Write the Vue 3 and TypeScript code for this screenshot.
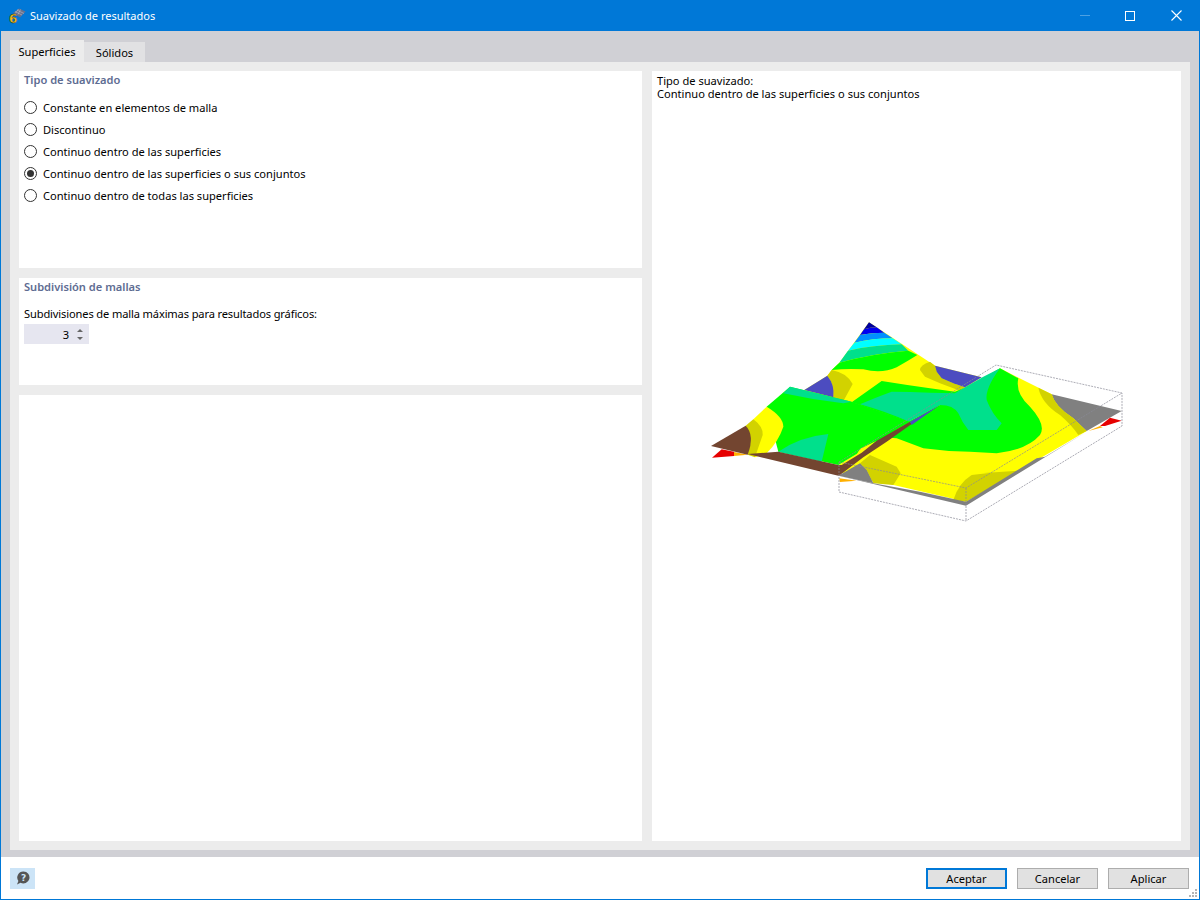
<script setup lang="ts">
import { ref } from 'vue'

interface Shape {
  d: string
  fill: string
}

const tabs = ['Superficies', 'Sólidos']
const activeTab = ref('Superficies')

const options = [
  'Constante en elementos de malla',
  'Discontinuo',
  'Continuo dentro de las superficies',
  'Continuo dentro de las superficies o sus conjuntos',
  'Continuo dentro de todas las superficies',
]
const smoothing = ref(options[3])

const YELLOW = '#ffff00'
const OLIVE = '#d2d200'
const GREEN = '#00ff00'
const TEAL = '#00e08c'
const BROWN = '#734530'
const PURPLE = '#4c4cc0'
const GRAY = '#808080'

// back plate with the peak
const backPlate: Shape[] = [
  { fill: YELLOW, d: 'M507,37 L705,167 L845,202 L720,285 L625,335 L313,240 L382,197 L395,180 L418,158 Z' },
  { fill: '#0000a0', d: 'M507,37 L492,58 Q510,52 530,52 Z' },
  { fill: '#0000f0', d: 'M492,58 L480,75 Q515,68 553,68 L530,52 Q510,52 492,58 Z' },
  { fill: '#0090ff', d: 'M480,75 L463,98 Q520,85 578,85 L553,68 Q515,68 480,75 Z' },
  { fill: '#00ffff', d: 'M463,98 L444,122 Q520,105 605,103 L578,85 Q520,85 463,98 Z' },
  { fill: TEAL, d: 'M444,122 L418,158 Q520,130 625,122 L605,103 Q520,105 444,122 Z' },
  { fill: GREEN, d: 'M418,158 L395,180 Q440,175 490,178 Q545,192 590,172 Q620,155 652,135 L625,122 Q520,130 418,158 Z' },
  { fill: OLIVE, d: 'M395,180 L382,197 Q405,225 400,262 L432,270 L458,222 Q440,188 395,180 Z' },
  { fill: PURPLE, d: 'M382,197 L313,240 L400,262 Q405,225 382,197 Z' },
  { fill: OLIVE, d: 'M690,155 L705,167 L710,185 L725,205 L760,220 L795,232 L780,242 L720,220 L675,200 L660,180 Q660,165 690,155 Z' },
  { fill: PURPLE, d: 'M705,167 L845,202 L795,232 L760,220 L725,205 L710,185 Z' },
  { fill: GREEN, d: 'M455,277 L545,213 Q620,225 690,235 L765,245 L790,235 L720,285 L625,335 Z' },
]

// right plate, in its own crop coordinates
const rightPlate: Shape[] = [
  { fill: '#ffb000', d: 'M-242,385 L-190,392 L-240,396 Z' },
  { fill: YELLOW, d: 'M240,55 L395,133 L500,243 L138,455 L-245,367 L-245,345 L-35,215 L60,165 Z' },
  { fill: GRAY, d: 'M395,133 L605,183 L500,243 Q480,225 460,205 Q405,170 395,133 Z' },
  { fill: OLIVE, d: 'M355,113 L395,133 Q405,170 460,205 L500,243 L475,255 Q455,225 420,195 Q365,160 355,113 Z' },
  { fill: OLIVE, d: 'M100,450 Q115,400 155,375 Q230,365 300,362 L138,455 Z' },
  { fill: OLIVE, d: 'M-180,340 L-150,315 L-70,350 L-58,370 L-80,405 L-140,400 L-160,360 Z' },
  { fill: GRAY, d: 'M-245,377 L-180,340 L-160,360 L-140,400 Z' },
  { fill: GRAY, d: 'M-245,377 L-140,400 L0,425 L138,455 L350,325 L375,320 L500,245 L138,467 Z' },
  { fill: GREEN, d: 'M-100,265 Q-90,262 -70,265 Q-30,280 10,295 Q80,305 150,305 L230,310 Q320,300 360,255 Q380,225 330,170 Q285,130 295,85 L240,55 L60,165 L-35,215 Z' },
  { fill: TEAL, d: 'M-180,163 Q-140,145 -85,125 Q-30,125 30,128 L105,130 L130,115 L190,80 L240,55 Q195,115 200,150 Q215,190 245,220 L230,240 L145,240 Q125,215 115,190 Q100,165 60,165 L-35,215 Q-100,185 -180,163 Z' },
  { fill: '#e60000', d: 'M540,228 L570,203 L605,212 L555,228 Z' },
  { fill: '#ffb000', d: 'M505,243 L540,228 L548,232 Z' },
]

// front left plate and the brown ridge
const leftPlate: Shape[] = [
  { fill: '#e60000', d: 'M36,443 L65,418 L102,425 L102,438 Z' },
  { fill: '#ffb000', d: 'M102,426 L143,434 L102,438 Z' },
  { fill: GREEN, d: 'M270,230 L200,290 L235,425 L415,465 L630,335 L455,275 Z' },
  { fill: TEAL, d: 'M270,230 L455,275 L430,280 Q340,270 250,250 Z' },
  { fill: TEAL, d: 'M235,425 Q300,380 385,372 L365,455 Z' },
  { fill: YELLOW, d: 'M160,328 L200,290 Q250,320 250,350 Q235,395 200,430 L165,442 Z' },
  { fill: OLIVE, d: 'M137,347 L160,328 Q190,350 188,375 L165,442 L143,434 Z' },
  { fill: BROWN, d: 'M33,408 L137,347 Q165,375 143,434 Z' },
  { fill: YELLOW, d: 'M470,435 Q478,415 490,412 L530,392 L485,428 Z' },
  { fill: BROWN, d: 'M143,432 L235,425 L415,465 L425,465 L485,428 L530,392 L630,335 L635,342 L560,395 L490,442 L420,495 L415,497 Z' },
  { fill: PURPLE, d: 'M630,335 L720,285 L635,345 Z' },
]

const boxLines = [
  'M839,462 L996,365 L1122,393 L966,488 L839,462',
  'M839,492 L966,521 L1122,426 L1122,393',
  'M839,462 L839,492',
  'M966,488 L966,521',
]
</script>

<template>
  <div class="window">
    <header class="titlebar">
      <svg class="app-icon" viewBox="0 0 18 16" aria-hidden="true">
        <path d="M5 5 L11 0.5 L17.5 3.5 L12 9.5 Z" fill="#67708c" />
        <path d="M7 3.5 L14 7 M9 2 L16 5.5 M10 6.5 L12.5 1.5 M7.5 5 L10.5 1" stroke="#b5bccd" stroke-width="0.6" />
        <text x="1" y="14.5" class="app-six">6</text>
      </svg>
      <span class="title">Suavizado de resultados</span>
      <div class="window-buttons">
        <span class="wb-min"></span>
        <span class="wb-max"></span>
        <svg class="wb-close" viewBox="0 0 11 11" aria-hidden="true">
          <path d="M0.5 0.5 L10.5 10.5 M10.5 0.5 L0.5 10.5" stroke="#fff" stroke-width="1.1" />
        </svg>
      </div>
    </header>

    <div class="body">
      <nav class="tabs">
        <button
          v-for="tab in tabs"
          :key="tab"
          class="tab"
          :class="{ 'tab--active': tab === activeTab }"
          @click="activeTab = tab"
        >
          {{ tab }}
        </button>
      </nav>

      <main class="content">
        <div class="left">
          <section class="panel panel--type">
            <h3>Tipo de suavizado</h3>
            <div class="radios">
              <label v-for="opt in options" :key="opt" class="radio">
                <input v-model="smoothing" type="radio" name="smoothing" :value="opt" />
                <span>{{ opt }}</span>
              </label>
            </div>
          </section>

          <section class="panel panel--mesh">
            <h3>Subdivisión de mallas</h3>
            <p class="mesh-label">Subdivisiones de malla máximas para resultados gráficos:</p>
            <div class="spinner">
              <span class="spinner-value">3</span>
              <span class="spinner-arrows">
                <i class="arrow-up"></i>
                <i class="arrow-down"></i>
              </span>
            </div>
          </section>

          <section class="panel panel--empty"></section>
        </div>

        <section class="panel preview">
          <p class="preview-text">Tipo de suavizado:<br />{{ smoothing }}</p>
          <svg class="plot" viewBox="652 102 529 739">
            <g transform="translate(700 310) scale(0.33333)">
              <path v-for="(s, i) in backPlate" :key="'b' + i" :d="s.d" :fill="s.fill" />
              <g transform="translate(660 120)">
                <path v-for="(s, i) in rightPlate" :key="'r' + i" :d="s.d" :fill="s.fill" />
              </g>
              <path v-for="(s, i) in leftPlate" :key="'l' + i" :d="s.d" :fill="s.fill" />
            </g>
            <path
              v-for="line in boxLines"
              :key="line"
              :d="line"
              class="box-line"
            />
          </svg>
        </section>
      </main>
    </div>

    <footer class="footer">
      <button class="help" aria-label="Ayuda">
        <svg viewBox="0 0 16 16" width="16" height="16" aria-hidden="true">
          <path d="M8.5 1.5 a6 6 0 1 1 -3 11.2 L2 14.5 L3.4 11 A6 6 0 0 1 8.5 1.5 Z" fill="#555" />
          <text x="8.5" y="11" class="help-mark">?</text>
        </svg>
      </button>
      <div class="actions">
        <button class="btn btn--default">Aceptar</button>
        <button class="btn">Cancelar</button>
        <button class="btn">Aplicar</button>
      </div>
      <svg class="grip" viewBox="0 0 10 10" aria-hidden="true">
        <path d="M7 1h2v2H7zM4 4h2v2H4zM7 4h2v2H7zM1 7h2v2H1zM4 7h2v2H4zM7 7h2v2H7z" fill="#b4b4b4" />
      </svg>
    </footer>
  </div>
</template>

<style scoped>
.window {
  position: relative;
  box-sizing: border-box;
  width: 1200px;
  height: 900px;
  display: flex;
  flex-direction: column;
  border: 1px solid #0078d7;
  border-top: 0;
  font-family: "Noto Sans", sans-serif;
  font-size: 11.1px;
  color: #000;
  background: #fff;
}

/* title bar */
.titlebar {
  height: 31px;
  margin: 0 -1px;
  flex-shrink: 0;
  display: flex;
  align-items: center;
  padding-left: 8px;
  background: #0078d7;
  color: #fff;
}

.app-icon {
  width: 18px;
  height: 16px;
  margin-right: 4px;
  overflow: visible;
}

.app-six {
  font-family: "DejaVu Sans", sans-serif;
  font-weight: 700;
  font-size: 12px;
  fill: #f4c020;
  stroke: #3a3010;
  stroke-width: 0.4px;
}

.title {
  font-size: 11px;
}

.window-buttons {
  margin-left: auto;
  display: flex;
  align-items: center;
  margin-right: 18px;
}

.wb-min {
  width: 10px;
  height: 1px;
  margin-right: 35px;
  background: #4da1e3;
}

.wb-max {
  box-sizing: border-box;
  width: 10px;
  height: 10px;
  margin-right: 36px;
  border: 1px solid #fff;
}

.wb-close {
  width: 11px;
  height: 11px;
}

/* tabs and content */
.body {
  flex: 1;
  display: flex;
  flex-direction: column;
  padding: 9px 9px 7px;
  background: #d0d0d5;
  min-height: 0;
}

.tabs {
  display: flex;
  align-items: flex-end;
  height: 22px;
  flex-shrink: 0;
}

.tab {
  height: 20px;
  padding: 0;
  border: 0;
  font: inherit;
  background: #e1e1e3;
  color: #000;
}

.tab:first-child {
  width: 74px;
}

.tab:last-child {
  width: 61px;
}

.tab--active {
  height: 22px;
  background: #ececec;
}

.content {
  flex: 1;
  display: grid;
  grid-template-columns: 623px 529px;
  gap: 10px;
  padding: 9px;
  background: #ececec;
  min-height: 0;
}

.left {
  display: grid;
  grid-template-rows: 197px 107px 446px;
  gap: 10px;
}

.panel {
  background: #fff;
  min-width: 0;
}

h3 {
  margin: 0;
  padding: 2px 5px 0;
  font-size: 11.1px;
  line-height: 14px;
  font-weight: 600;
  color: #5e6c92;
}

.radios {
  display: flex;
  flex-direction: column;
  gap: 6px;
  padding: 12px 5px 0;
}

.radio {
  display: flex;
  align-items: center;
  height: 16px;
  gap: 6px;
}

.radio input {
  appearance: none;
  box-sizing: border-box;
  width: 13px;
  height: 13px;
  margin: 0;
  border: 1px solid #333;
  border-radius: 50%;
  background: #fff;
  display: grid;
  place-items: center;
}

.radio input:checked::before {
  content: "";
  width: 7px;
  height: 7px;
  border-radius: 50%;
  background: #333;
}

.mesh-label {
  margin: 12px 0 0;
  padding: 0 5px;
  line-height: 16px;
  letter-spacing: -0.13px;
}

.spinner {
  display: flex;
  align-items: center;
  justify-content: flex-end;
  width: 65px;
  height: 20px;
  margin: 2px 0 0 5px;
  background: #e6e6f0;
}

.spinner-value {
  margin-right: 8px;
}

.spinner-arrows {
  display: flex;
  flex-direction: column;
  gap: 5px;
  margin-right: 6px;
}

.arrow-up,
.arrow-down {
  width: 0;
  height: 0;
  border-left: 3px solid transparent;
  border-right: 3px solid transparent;
}

.arrow-up {
  border-bottom: 3px solid #666;
}

.arrow-down {
  border-top: 3px solid #666;
}

.preview {
  display: flex;
  flex-direction: column;
}

.preview-text {
  margin: 0;
  height: 31px;
  flex-shrink: 0;
  padding: 3px 0 0 5px;
  box-sizing: border-box;
  line-height: 13px;
}

.plot {
  flex: 1;
  width: 529px;
  min-height: 0;
  display: block;
}

.box-line {
  fill: none;
  stroke: #8a8a96;
  stroke-width: 0.7;
  stroke-dasharray: 2 1;
}

/* footer */
.footer {
  height: 42px;
  flex-shrink: 0;
  display: flex;
  align-items: center;
  padding: 0 10px 0 9px;
  background: #fff;
}

.help {
  width: 25px;
  height: 21px;
  padding: 0;
  border: 0;
  display: grid;
  place-items: center;
  background: #cce4f7;
}

.help-mark {
  font-family: "DejaVu Sans", sans-serif;
  font-size: 9px;
  font-weight: 700;
  fill: #cce4f7;
  text-anchor: middle;
}

.actions {
  margin-left: auto;
  display: flex;
  gap: 10px;
}

.btn {
  box-sizing: border-box;
  width: 81px;
  height: 21px;
  padding: 0;
  border: 1px solid #adadad;
  background: #e1e1e1;
  font: inherit;
  color: #000;
}

.btn--default {
  border: 2px solid #0078d7;
}

.grip {
  position: absolute;
  right: 1px;
  bottom: 1px;
  width: 10px;
  height: 10px;
}
</style>

<style>
html,
body {
  margin: 0;
  background: #fff;
}
</style>
